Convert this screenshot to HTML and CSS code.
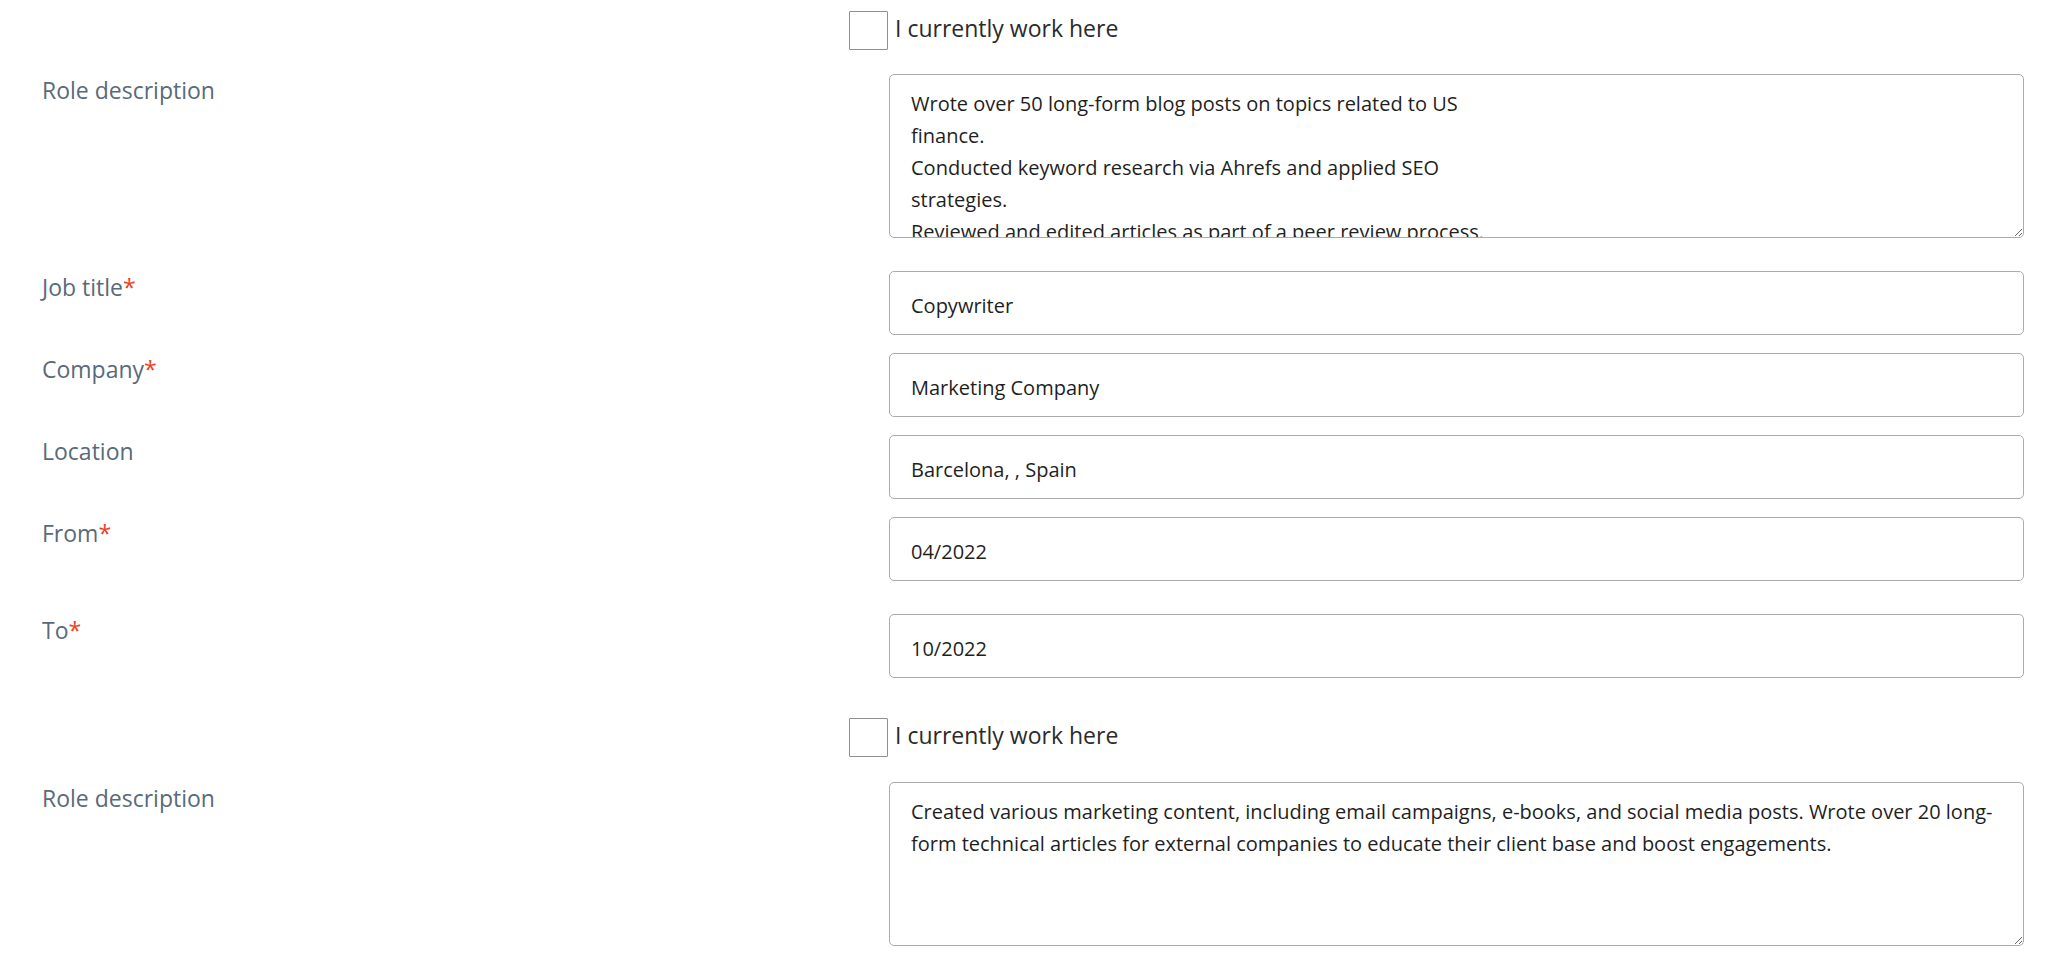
FILE: index.html
```html
<!DOCTYPE html>
<html lang="en">
<head>
<meta charset="utf-8">
<title>Experience form</title>
<link rel="stylesheet" href="styles.css">
</head>
<body>
<form class="form">
  <div class="row row-check">
    <div class="spacer"></div>
    <label class="check"><input type="checkbox" class="cb"><span class="check-text">I currently work here</span></label>
  </div>
  <div class="row row-area">
    <label class="label">Role description</label>
    <div class="field"><textarea class="area">Wrote over 50 long-form blog posts on topics related to US
finance.
Conducted keyword research via Ahrefs and applied SEO
strategies.
Reviewed and edited articles as part of a peer review process.</textarea></div>
  </div>
  <div class="row row-first">
    <label class="label">Job title<span class="req">*</span></label>
    <div class="field"><input class="input" type="text" value="Copywriter"></div>
  </div>
  <div class="row row-next">
    <label class="label">Company<span class="req">*</span></label>
    <div class="field"><input class="input" type="text" value="Marketing Company"></div>
  </div>
  <div class="row row-next">
    <label class="label">Location</label>
    <div class="field"><input class="input" type="text" value="Barcelona, , Spain"></div>
  </div>
  <div class="row row-next">
    <label class="label">From<span class="req">*</span></label>
    <div class="field"><input class="input" type="text" value="04/2022"></div>
  </div>
  <div class="row row-to">
    <label class="label">To<span class="req">*</span></label>
    <div class="field"><input class="input" type="text" value="10/2022"></div>
  </div>
  <div class="row row-check2">
    <div class="spacer"></div>
    <label class="check"><input type="checkbox" class="cb"><span class="check-text">I currently work here</span></label>
  </div>
  <div class="row row-area">
    <label class="label">Role description</label>
    <div class="field"><textarea class="area">Created various marketing content, including email campaigns, e-books, and social media posts. Wrote over 20 long-form technical articles for external companies to educate their client base and boost engagements.</textarea></div>
  </div>
</form>
</body>
</html>
```

FILE: styles.css
```css
html, body {
  margin: 0;
  padding: 0;
  background: #ffffff;
}

body {
  font-family: "Open Sans", "Noto Sans", sans-serif;
  color: #2c2c2c;
}

.form {
  padding: 10px 24px 0 42px;
}

.row {
  display: grid;
  grid-template-columns: 807px 1fr;
  align-items: start;
}

.row-area { margin-top: 24px; }
.row-first { margin-top: 33px; }
.row-next { margin-top: 18px; }
.row-to { margin-top: 33px; }
.row-check2 { margin-top: 39px; }
.row-check2 + .row-area { margin-top: 25px; }

.label {
  font-size: 23px;
  line-height: 30px;
  padding-top: 1px;
  color: #596a7a;
}

.req {
  color: #ee3d23;
}

.field {
  margin-left: 40px;
}

.input,
.area {
  box-sizing: border-box;
  width: 100%;
  margin: 0;
  display: block;
  border: 1px solid #ababab;
  border-radius: 5px;
  background: #ffffff;
  font-family: "Open Sans", "Noto Sans", sans-serif;
  font-size: 20px;
  line-height: 32px;
  color: #1f1f1f;
  outline: none;
}

.input {
  height: 64px;
  padding: 17px 21px 13px 21px;
}

.area {
  height: 164px;
  padding: 13px 21px 10px 21px;
  resize: both;
  overflow: hidden;
}

.check {
  display: flex;
  align-items: center;
  height: 40px;
}

.cb {
  appearance: none;
  -webkit-appearance: none;
  box-sizing: border-box;
  width: 39px;
  height: 39px;
  margin: 0;
  border: 1px solid #909090;
  border-radius: 1px;
  background: #ffffff;
  flex: none;
}

.check-text {
  margin-left: 7px;
  font-size: 23px;
  line-height: 30px;
  color: #2b2b2b;
  padding-bottom: 4px;
}
```
